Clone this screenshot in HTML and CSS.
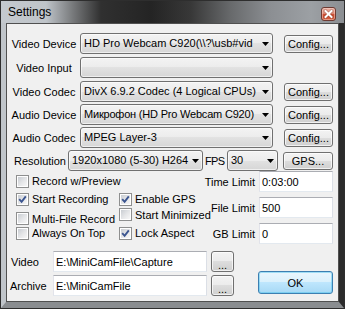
FILE: index.html
```html
<!DOCTYPE html>
<html>
<head>
<meta charset="utf-8">
<title>Settings</title>
<link rel="stylesheet" href="styles.css">
</head>
<body>
<div class="window">
  <div class="titlebar">
    <span class="title">Settings</span>
    <span class="close"><svg width="13" height="12" viewBox="0 0 13 12"><path d="M3.5 3L9.5 9M9.5 3L3.5 9" stroke="#5a1a10" stroke-width="3.2" stroke-linecap="square" opacity="0.35"/><path d="M3.5 3L9.5 9M9.5 3L3.5 9" stroke="#fff" stroke-width="2" stroke-linecap="square"/></svg></span>
  </div>
  <div class="frame">
    <div class="client">
      <div class="rows">
        <div class="row sp">
          <span class="lbl">Video Device</span>
          <div class="combo main"><span class="ctext">HD Pro Webcam C920(\\?\usb#vid</span><span class="arrow"><svg width="7" height="4" viewBox="0 0 7 4"><path d="M0 0h7L3.5 4z"/></svg></span></div>
          <button class="btn cfg">Config...</button>
        </div>
        <div class="row sp">
          <span class="lbl">Video Input</span>
          <div class="combo main"><span class="ctext"></span><span class="arrow"><svg width="7" height="4" viewBox="0 0 7 4"><path d="M0 0h7L3.5 4z"/></svg></span></div>
        </div>
        <div class="row">
          <span class="lbl">Video Codec</span>
          <div class="combo main"><span class="ctext">DivX 6.9.2 Codec (4 Logical CPUs)</span><span class="arrow"><svg width="7" height="4" viewBox="0 0 7 4"><path d="M0 0h7L3.5 4z"/></svg></span></div>
          <button class="btn cfg">Config...</button>
        </div>
        <div class="row">
          <span class="lbl">Audio Device</span>
          <div class="combo main"><span class="ctext tight">Микрофон (HD Pro Webcam C920)</span><span class="arrow"><svg width="7" height="4" viewBox="0 0 7 4"><path d="M0 0h7L3.5 4z"/></svg></span></div>
          <button class="btn cfg">Config...</button>
        </div>
        <div class="row">
          <span class="lbl">Audio Codec</span>
          <div class="combo main"><span class="ctext">MPEG Layer-3</span><span class="arrow"><svg width="7" height="4" viewBox="0 0 7 4"><path d="M0 0h7L3.5 4z"/></svg></span></div>
          <button class="btn cfg">Config...</button>
        </div>
        <div class="row">
          <span class="lbl-res">Resolution</span>
          <div class="combo res"><span class="ctext">1920x1080 (5-30) H264</span><span class="arrow"><svg width="7" height="4" viewBox="0 0 7 4"><path d="M0 0h7L3.5 4z"/></svg></span></div>
          <span class="fps-lbl">FPS</span>
          <div class="combo fps"><span class="ctext">30</span><span class="arrow"><svg width="7" height="4" viewBox="0 0 7 4"><path d="M0 0h7L3.5 4z"/></svg></span></div>
          <button class="btn gps">GPS...</button>
        </div>
      </div>

      <div class="opts">
        <div class="checks">
          <label class="cbitem"><span class="cb"></span>Record w/Preview</label>
          <span></span>
          <label class="cbitem"><span class="cb"><svg width="9" height="9" viewBox="0 0 9 9"><path d="M1.2 4.2L3.6 6.8L7.8 1.4" fill="none" stroke="#3b5590" stroke-width="1.9"/></svg></span>Start Recording</label>
          <label class="cbitem"><span class="cb"><svg width="9" height="9" viewBox="0 0 9 9"><path d="M1.2 4.2L3.6 6.8L7.8 1.4" fill="none" stroke="#3b5590" stroke-width="1.9"/></svg></span>Enable GPS</label>
          <label class="cbitem down"><span class="cb"></span>Multi-File Record</label>
          <label class="cbitem up"><span class="cb"></span>Start Minimized</label>
          <label class="cbitem"><span class="cb"></span>Always On Top</label>
          <label class="cbitem"><span class="cb"><svg width="9" height="9" viewBox="0 0 9 9"><path d="M1.2 4.2L3.6 6.8L7.8 1.4" fill="none" stroke="#3b5590" stroke-width="1.9"/></svg></span>Lock Aspect</label>
        </div>
        <div class="limits">
          <span class="llbl">Time Limit</span><span class="tb">0:03:00</span>
          <span class="llbl">File Limit</span><span class="tb">500</span>
          <span class="llbl">GB Limit</span><span class="tb">0</span>
        </div>
      </div>

      <div class="bottom">
        <div class="paths">
          <div class="prow">
            <span class="plbl">Video</span>
            <span class="tb path">E:\MiniCamFile\Capture</span>
            <button class="btn dots">...</button>
          </div>
          <div class="prow">
            <span class="plbl arch">Archive</span>
            <span class="tb path">E:\MiniCamFile</span>
            <button class="btn dots">...</button>
          </div>
        </div>
        <button class="btn ok">OK</button>
      </div>
    </div>
  </div>
</div>
</body>
</html>
```

FILE: styles.css
```css
* { box-sizing: border-box; }
html, body { margin: 0; padding: 0; }
body {
  width: 345px;
  height: 309px;
  overflow: hidden;
  font-family: "Liberation Sans", Arial, sans-serif;
  font-size: 11px;
  color: #000;
  background: #1a1a1a;
}
.window {
  width: 345px;
  height: 309px;
  border: 1px solid #2e2e2e;
  display: flex;
  flex-direction: column;
  background: linear-gradient(90deg, #c4c9ce 0, #bfc4c9 45px, #77797b 72px, #303030 100px, #242424 150px, #383838 190px, #686a6c 230px, #8c8f93 270px, #9ca0a4 310px, #8b8e92 344px);
}
.titlebar {
  height: 22px;
  flex: none;
  display: flex;
  justify-content: space-between;
  align-items: flex-start;
  padding: 0 8px 0 7px;
}
.title {
  font-size: 12px;
  line-height: 14px;
  margin-top: 4px;
  color: #000;
}
.close {
  width: 15px;
  height: 14px;
  margin-top: 6px;
  border: 1px solid #6e3b33;
  border-radius: 3px;
  background: linear-gradient(#eab1a4 0, #dd8a76 45%, #c94a2f 55%, #d4603f 100%);
  box-shadow: inset 0 0 0 1px rgba(255, 220, 210, 0.45);
  display: flex;
  align-items: center;
  justify-content: center;
}
.frame {
  flex: 1;
  display: flex;
  border-style: solid;
  border-width: 0 5px 6px 5px;
  border-color: transparent #2b2b2b #8a8d90 #c0c5ca;
}
.client {
  flex: 1;
  border: 1px solid #505050;
  background: #f0f0f0;
  padding: 9px 5px 0 1px;
  display: flex;
  flex-direction: column;
}
.rows {
  display: flex;
  flex-direction: column;
  gap: 2px;
}
.row {
  display: flex;
  align-items: center;
  height: 21px;
}
.row.sp { margin-bottom: 1px; }
.lbl {
  width: 72px;
  text-align: center;
  white-space: nowrap;
}
.lbl-res {
  width: 60px;
  text-align: right;
  padding-right: 2px;
}
.fps-lbl {
  width: 24px;
  padding-left: 2px;
  letter-spacing: -0.6px;
}
.combo {
  height: 21px;
  display: flex;
  align-items: center;
  border: 1px solid #707070;
  border-radius: 3px;
  background: linear-gradient(#f3f3f3 0, #ececec 50%, #e2e2e2 50%, #d6d6d6 100%);
  box-shadow: inset 0 0 0 1px rgba(255, 255, 255, 0.6);
  padding-left: 3px;
}
.combo.main { width: 193px; }
.combo.res { width: 135px; }
.combo.fps { width: 51px; }
.ctext {
  flex: 1;
  overflow: hidden;
  white-space: nowrap;
  line-height: 13px;
}
.ctext.tight { letter-spacing: -0.2px; }
.arrow {
  width: 13px;
  flex: none;
  display: flex;
  justify-content: center;
  align-items: center;
}
.arrow svg { display: block; }
.btn {
  font-family: "Liberation Sans", Arial, sans-serif;
  font-size: 11px;
  color: #000;
  padding: 0;
  border: 1px solid #707070;
  border-radius: 3px;
  background: linear-gradient(#f3f3f3 0, #ebebeb 50%, #dddddd 50%, #cfcfcf 100%);
  box-shadow: inset 0 0 0 1px rgba(255, 255, 255, 0.7);
  line-height: 14px;
}
.btn.cfg { width: 49px; height: 18px; margin-left: 11px; }
.btn.gps { width: 50px; height: 18px; margin-left: 5px; }
.opts {
  display: flex;
  justify-content: space-between;
}
.checks {
  flex: none;
  display: grid;
  grid-template-columns: 103px 80px;
  grid-template-rows: 18px 18px 17px 16px;
  padding: 1px 0 0 8px;
}
.cbitem {
  display: flex;
  align-items: center;
  gap: 3px;
  white-space: nowrap;
}
.cbitem.up { align-self: start; }
.cbitem.down { align-self: end; }
.cb {
  width: 13px;
  height: 13px;
  flex: none;
  border: 1px solid #8e8f8f;
  padding: 1px;
  background: linear-gradient(135deg, #c9cdd2 0, #e6e7e9 55%, #f7f7f7 100%) content-box, #fff;
  display: flex;
  align-items: center;
  justify-content: center;
}
.cb svg { display: block; }
.limits {
  flex: none;
  display: grid;
  grid-template-columns: auto 74px;
  column-gap: 4px;
  row-gap: 5px;
  align-items: center;
}
.llbl { text-align: right; white-space: nowrap; }
.tb {
  height: 21px;
  display: flex;
  align-items: center;
  background: #fff;
  border: 1px solid;
  border-color: #abadb3 #dbdfe6 #e3e9ef #e2e3ea;
  padding-left: 2px;
  white-space: nowrap;
  overflow: hidden;
}
.bottom {
  display: flex;
  margin-top: 7px;
}
.paths {
  display: flex;
  flex-direction: column;
  gap: 3px;
}
.prow {
  display: flex;
  align-items: center;
  height: 21px;
}
.plbl {
  width: 45px;
  padding-left: 3px;
}
.plbl.arch { padding-left: 2px; }
.tb.path { width: 154px; }
.btn.dots {
  width: 23px;
  height: 21px;
  margin-left: 4px;
  line-height: 21px;
  padding-top: 3px;
}
.btn.ok {
  margin-left: auto;
  align-self: flex-end;
  margin-bottom: 2px;
  width: 75px;
  height: 23px;
  border-color: #3c7fb1;
  background: linear-gradient(#eaf6fd 0, #d9f0fc 50%, #bee6fd 50%, #a7d9f5 100%);
  box-shadow: inset 0 0 0 1px rgba(72, 192, 236, 0.45);
}
```
